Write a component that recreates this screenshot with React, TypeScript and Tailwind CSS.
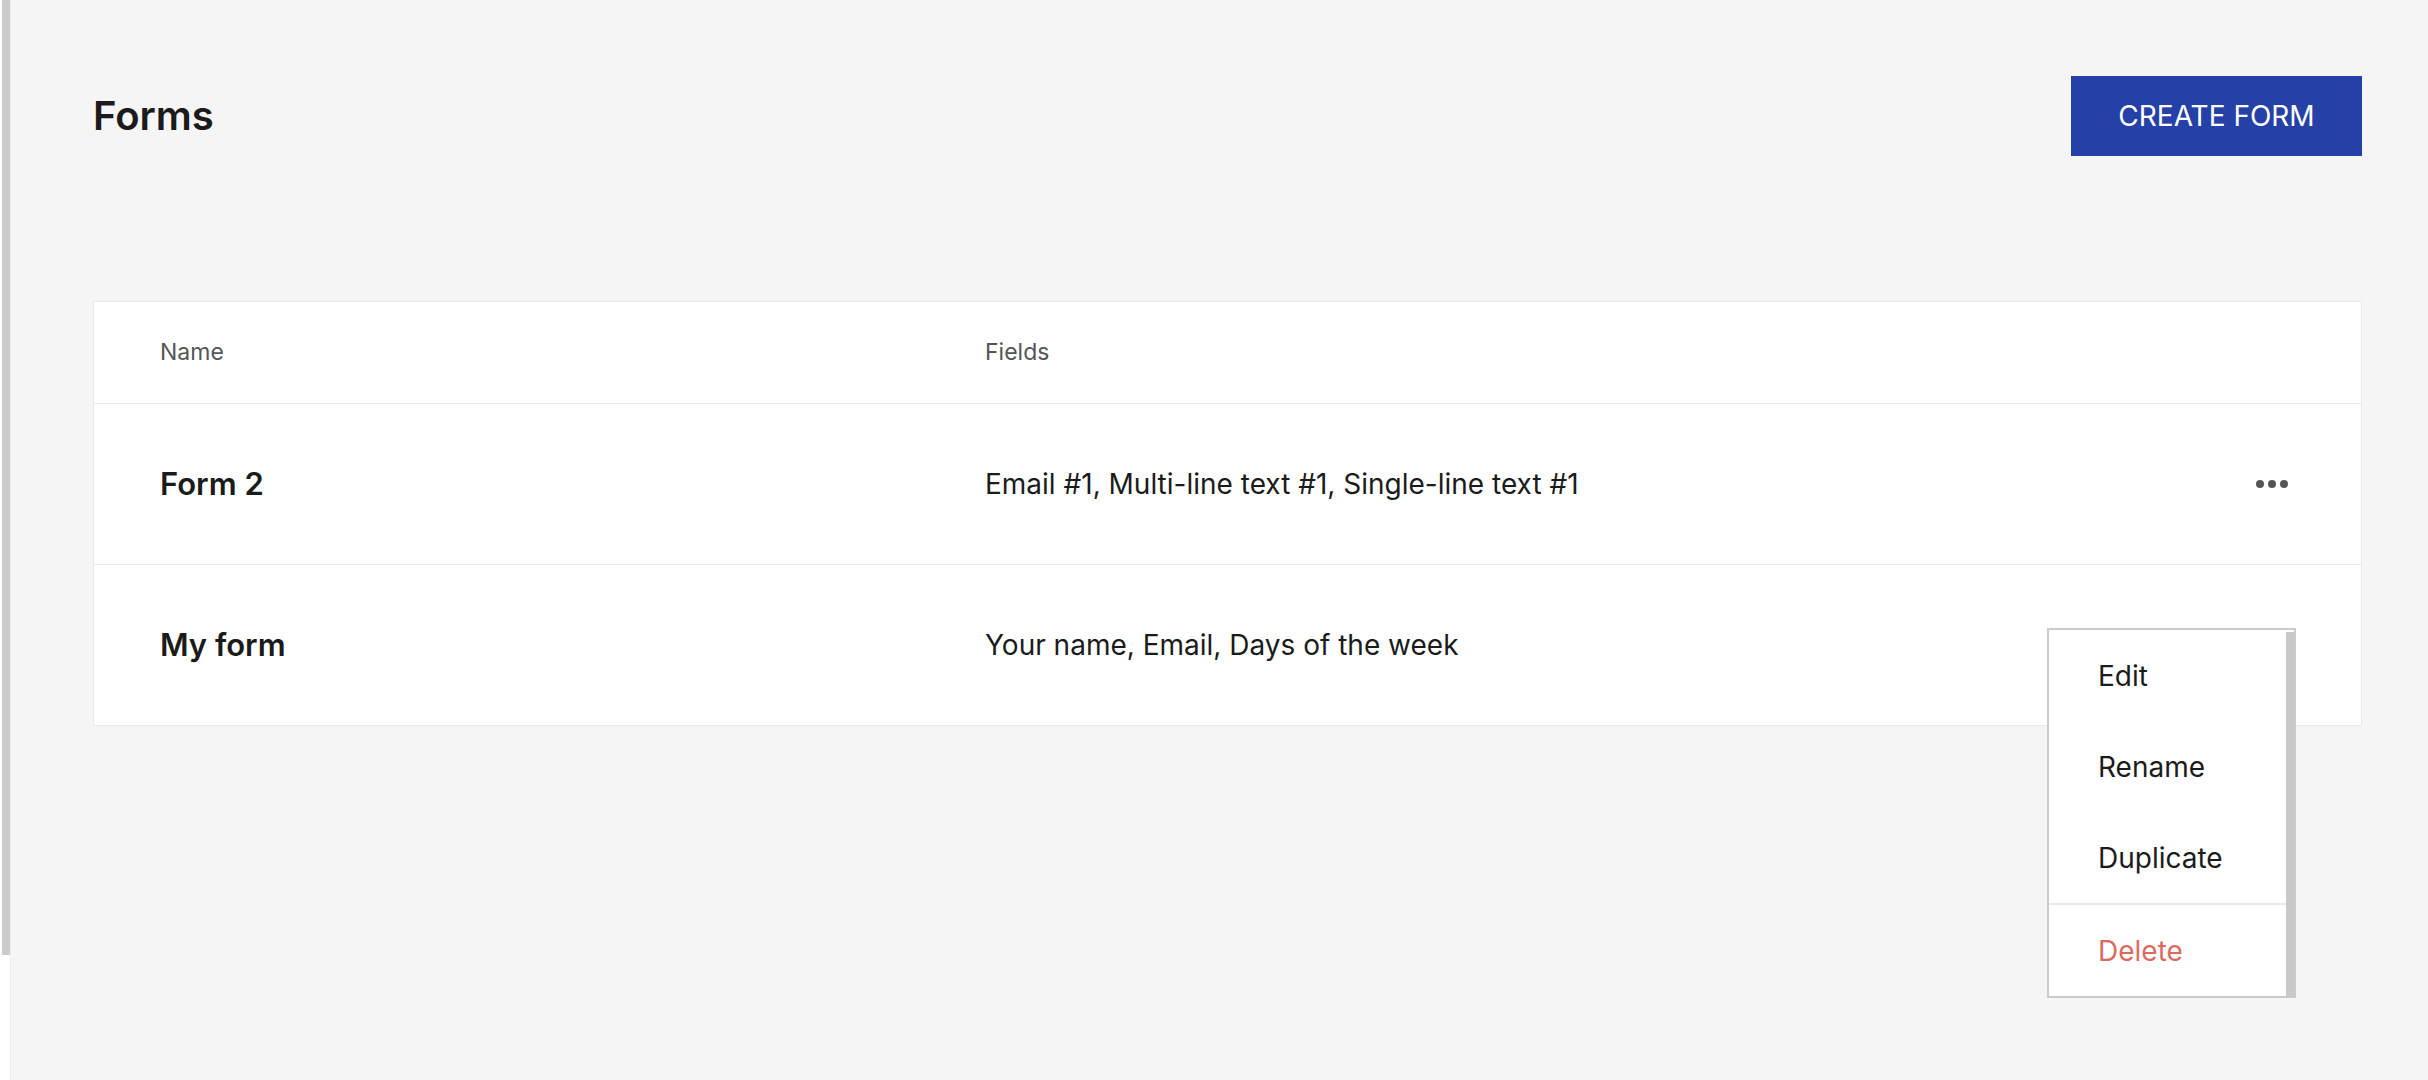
const rows = [
  { name: "Form 2", fields: "Email #1, Multi-line text #1, Single-line text #1", menuOpen: false },
  { name: "My form", fields: "Your name, Email, Days of the week", menuOpen: true },
];

const menuItems = ["Edit", "Rename", "Duplicate"];

function Dots() {
  return (
    <svg width="32" height="8" viewBox="0 0 32 8" className="block">
      <circle cx="4" cy="4" r="4" fill="#555555" />
      <circle cx="16" cy="4" r="4" fill="#555555" />
      <circle cx="28" cy="4" r="4" fill="#555555" />
    </svg>
  );
}

function RowMenu() {
  return (
    <div className="absolute right-[65px] top-[63px] z-10 flex w-[249px] border-2 border-[#cbcbcb] bg-white">
      <div className="flex flex-1 flex-col">
        {menuItems.map((item) => (
          <div key={item} className="flex h-[91px] items-center pl-[49px] text-[28px] text-[#1b1b1b]">
            {item}
          </div>
        ))}
        <div className="h-[2px] bg-[#e8e8e8]" />
        <div className="flex h-[91px] items-center pl-[49px] text-[28px] text-[#dc6b5e]">Delete</div>
      </div>
      <div className="mt-[2px] w-[8px] bg-[#c9c9cb]" />
    </div>
  );
}

export default function App() {
  return (
    <div className="flex h-screen w-full bg-[#f5f5f5] font-['Inter','Liberation_Sans',sans-serif]">
      <div className="w-[11px] shrink-0 border-r border-[#ececec] bg-white">
        <div className="ml-[2px] h-[955px] w-[8px] bg-[#cbccce]" />
      </div>

      <main className="flex-1 pl-[82px] pr-[66px] pt-[76px]">
        <div className="flex h-[80px] items-center justify-between">
          <h1 className="text-[40px] font-semibold text-[#1b1b1b]">Forms</h1>
          <button className="flex h-[80px] w-[291px] items-center justify-center bg-[#2541a7] text-[28px] text-white">
            CREATE FORM
          </button>
        </div>

        <div className="mt-[145px] border border-[#e9e9e9] bg-white">
          <div className="grid h-[101px] grid-cols-[825px_1fr_auto] items-center pl-[66px] pr-[73px] text-[23px] text-[#555555]">
            <span>Name</span>
            <span>Fields</span>
            <span className="w-[32px]" />
          </div>
          {rows.map((row) => (
            <div
              key={row.name}
              className="relative grid h-[161px] grid-cols-[825px_1fr_auto] items-center border-t border-[#e9e9e9] pl-[66px] pr-[73px]"
            >
              <span className="text-[31px] font-semibold text-[#1b1b1b]">{row.name}</span>
              <span className="text-[28px] text-[#1b1b1b]">{row.fields}</span>
              <Dots />
              {row.menuOpen && <RowMenu />}
            </div>
          ))}
        </div>
      </main>
    </div>
  );
}
